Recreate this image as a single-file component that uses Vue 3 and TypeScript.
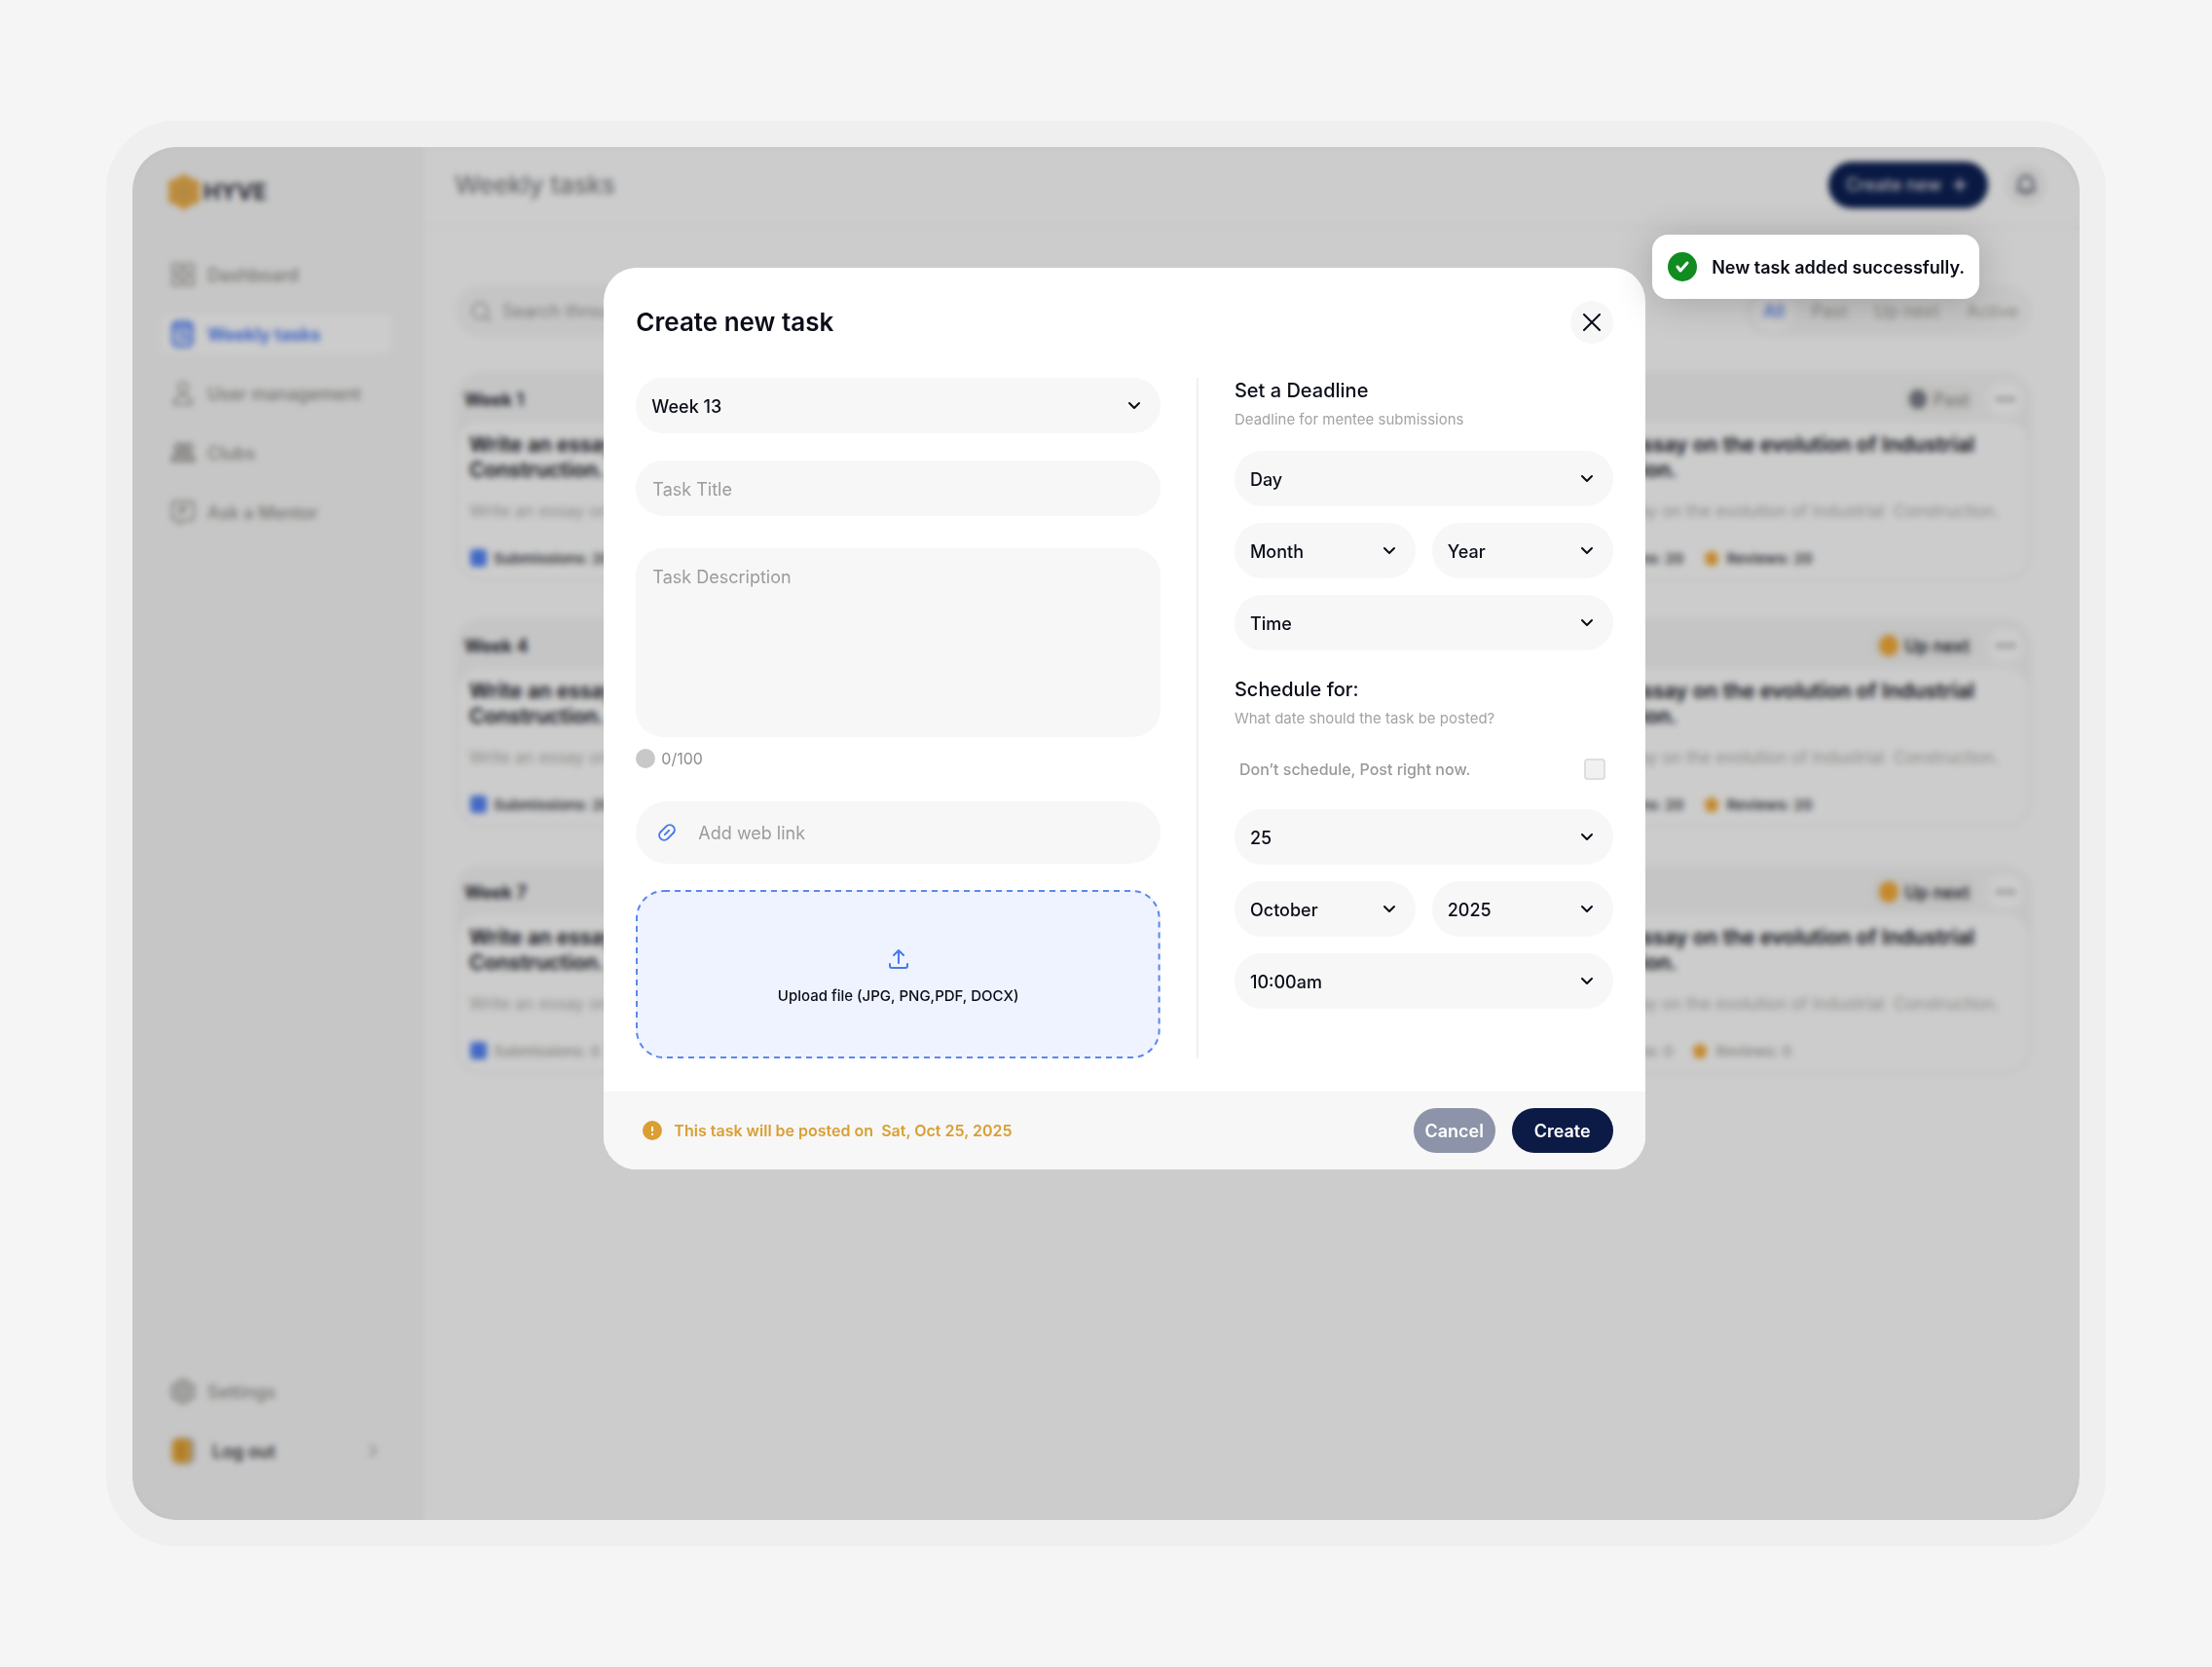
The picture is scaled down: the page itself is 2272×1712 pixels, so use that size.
<script setup lang="ts">
import { computed, ref } from 'vue'

type IconName = 'grid' | 'task' | 'user' | 'clubs' | 'chat'
interface NavItem { label: string; icon: IconName; active?: boolean }
interface TaskCard { week: number; status: 'Past' | 'Up next'; count: number }
interface Choice { name: string; options: string[]; half?: boolean }

const nav: NavItem[] = [
  { label: 'Dashboard', icon: 'grid' },
  { label: 'Weekly tasks', icon: 'task', active: true },
  { label: 'User management', icon: 'user' },
  { label: 'Clubs', icon: 'clubs' },
  { label: 'Ask a Mentor', icon: 'chat' },
]
const filters = ['All', 'Past', 'Up next', 'Active']
const cards: TaskCard[] = [1, 3, 4, 6, 7, 9].map((week) => ({
  week,
  status: week < 4 ? 'Past' : 'Up next',
  count: week < 7 ? 20 : 0,
}))
const deadline: Choice[] = [
  { name: 'Day', options: ['Day'] },
  { name: 'Month', options: ['Month'], half: true },
  { name: 'Year', options: ['Year'], half: true },
  { name: 'Time', options: ['Time'] },
]
const schedule: Choice[] = [
  { name: 'Schedule day', options: ['25'] },
  { name: 'Schedule month', options: ['October'], half: true },
  { name: 'Schedule year', options: ['2025'], half: true },
  { name: 'Schedule time', options: ['10:00am'] },
]
const title = ref('')
const description = ref('')
const link = ref('')
const postNow = ref(false)
const counter = computed(() => `${description.value.length}/100`)
</script>

<template>
  <div class="page">
    <div class="frame">
      <div class="app" inert>
        <aside class="sidebar">
          <div class="logo">
            <svg width="36" height="40" viewBox="0 0 36 40">
              <path d="M18 1l7 5 9 3v22l-9 3-7 5-7-5-9-3V9l9-3z" fill="#eeb04a" />
              <path d="M18 9v22M9 14l18 12M27 14L9 26" stroke="#d8ab62" stroke-width="2" />
            </svg>
            <span>HYVE</span>
          </div>
          <nav>
            <a v-for="n in nav" :key="n.label" href="#" :class="{ active: n.active }">
              <svg width="26" height="28" viewBox="0 0 26 28" fill="none" stroke="currentColor" stroke-width="2">
                <g v-if="n.icon === 'grid'">
                  <rect x="2" y="3" width="9" height="9" rx="2" /><rect x="15" y="3" width="9" height="9" rx="2" />
                  <rect x="2" y="16" width="9" height="9" rx="2" /><rect x="15" y="16" width="9" height="9" rx="2" />
                </g>
                <g v-else-if="n.icon === 'task'" stroke-width="3">
                  <rect x="3" y="2" width="19" height="24" rx="4" /><path d="M4 7h17M8 13h8M8 19h4M13 20l6-4" />
                </g>
                <g v-else-if="n.icon === 'user'">
                  <circle cx="13" cy="8" r="5" /><path d="M4 25c0-6 4-9 9-9s9 3 9 9z" />
                </g>
                <g v-else-if="n.icon === 'clubs'" stroke-width="3">
                  <circle cx="9" cy="9" r="4" /><circle cx="18" cy="9" r="4" />
                  <path d="M2 22c0-4 3-6 7-6s7 2 7 6zM17 16c4 0 7 2 7 6h-6" />
                </g>
                <g v-else>
                  <path d="M5 3h16a3 3 0 0 1 3 3v13a3 3 0 0 1-3 3h-8l-3 4-3-4H5a3 3 0 0 1-3-3V6a3 3 0 0 1 3-3z" />
                  <path d="M10 16V9h6l-6 7" />
                </g>
              </svg>
              {{ n.label }}
            </a>
          </nav>
          <nav class="bottom">
            <a href="#">
              <svg width="26" height="28" viewBox="0 0 26 28" fill="#e0e0e0" stroke="currentColor" stroke-width="2">
                <path d="M13 2l11 6v12l-11 6-11-6V8z" /><circle cx="13" cy="14" r="5" />
              </svg>
              Settings
            </a>
            <a href="#" class="logout">
              <svg width="26" height="28" viewBox="0 0 26 28">
                <rect x="1" y="0" width="24" height="28" rx="8" fill="#bdb6a8" />
                <rect x="2" y="2" width="18" height="24" rx="6" fill="#f5ac2c" />
                <path d="M8 9h6M8 14h6M8 19h6" stroke="#8c7c58" stroke-width="2" />
              </svg>
              <span>Log out</span>
              <svg class="go" width="10" height="16" viewBox="0 0 10 16" fill="none" stroke="#aaa" stroke-width="2">
                <path d="M2 2l6 6-6 6" />
              </svg>
            </a>
          </nav>
        </aside>

        <main class="main">
          <header class="top">
            <h1>Weekly tasks</h1>
            <button class="new" type="button">
              Create new
              <svg width="14" height="14" viewBox="0 0 14 14" stroke="#fff" stroke-width="2"><path d="M7 0v14M0 7h14" /></svg>
            </button>
            <button class="bell" type="button" aria-label="Notifications">
              <svg width="22" height="24" viewBox="0 0 22 24" fill="none" stroke="#6d717c" stroke-width="3">
                <path d="M11 3a7 7 0 0 0-7 7v4l-1 4h16l-1-4v-4a7 7 0 0 0-7-7zM8 20h6" />
              </svg>
            </button>
          </header>
          <div class="content">
            <div class="tools">
              <div class="search">
                <svg width="22" height="22" viewBox="0 0 22 22" fill="none" stroke="#a5a5a5" stroke-width="2">
                  <circle cx="10" cy="10" r="8" /><path d="M16 16l5 5" />
                </svg>
                <input type="search" placeholder="Search through tasks" aria-label="Search through tasks" />
              </div>
              <div class="filters">
                <button v-for="(f, i) in filters" :key="f" type="button" :class="{ on: i === 0 }">{{ f }}</button>
              </div>
            </div>
            <div class="cards">
              <article v-for="c in cards" :key="c.week" class="card">
                <div class="card-head">
                  <h2>Week {{ c.week }}</h2>
                  <span class="status" :class="{ past: c.status === 'Past' }"><i></i>{{ c.status }}</span>
                  <button class="more" type="button" aria-label="More">
                    <svg width="18" height="4" viewBox="0 0 18 4" fill="#666"><circle cx="2" cy="2" r="2" /><circle cx="9" cy="2" r="2" /><circle cx="16" cy="2" r="2" /></svg>
                  </button>
                </div>
                <div class="card-body">
                  <h3>Write an essay on the evolution of Industrial Construction.</h3>
                  <p>Write an essay on the evolution of Industrial&nbsp; Construction.</p>
                  <div class="stats" :class="{ none: c.count === 0 }">
                    <svg width="18" height="20" viewBox="0 0 18 20"><rect x="1" y="1" width="17" height="18" rx="4" fill="#5484f8" /></svg>
                    <span>Submissions: {{ c.count }}</span>
                    <svg class="star" width="18" height="18" viewBox="0 0 18 18"><path d="M9 0l3 4 5 2-2 5v5l-6 1-6-1v-5L1 6l5-2z" fill="#f5ac38" /></svg>
                    <span>Reviews: {{ c.count }}</span>
                  </div>
                </div>
              </article>
            </div>
          </div>
        </main>
      </div>

      <div class="overlay">
        <form class="modal" role="dialog" aria-labelledby="modal-title" @submit.prevent>
          <div class="modal-main">
            <div class="modal-head">
              <h2 id="modal-title">Create new task</h2>
              <button class="close" type="button" aria-label="Close">
                <svg width="18" height="18" viewBox="0 0 18 18" fill="none" stroke="#0a0d18" stroke-width="2" stroke-linecap="round"><path d="M1 1l16 16M17 1L1 17" /></svg>
              </button>
            </div>
            <div class="columns">
              <div class="left">
                <div class="select">
                  <select aria-label="Week"><option>Week 13</option></select>
                  <svg class="chev" width="14" height="10" viewBox="0 0 14 10"><path d="M2 2l5 5 5-5" /></svg>
                </div>
                <input v-model="title" class="field title-field" placeholder="Task Title" aria-label="Task Title" />
                <textarea v-model="description" class="field desc" placeholder="Task Description" aria-label="Task Description" maxlength="100"></textarea>
                <div class="counter"><i></i>{{ counter }}</div>
                <div class="field link-field">
                  <svg width="20" height="20" viewBox="0 0 20 20" fill="none" stroke="#477aeb" stroke-width="2" stroke-linecap="round">
                    <g transform="rotate(-45 10 10)">
                      <path d="M8 5H6a5 5 0 0 0 0 10h7M12 15h2a5 5 0 0 0 0-10H7M7 10h6" />
                    </g>
                  </svg>
                  <input v-model="link" placeholder="Add web link" aria-label="Add web link" />
                </div>
                <label class="drop">
                  <svg class="dash" aria-hidden="true"><rect x="1" y="1" rx="28" /></svg>
                  <input type="file" class="file" />
                  <svg width="20" height="20" viewBox="0 0 20 20" fill="none" stroke="#477aeb" stroke-width="2" stroke-linecap="round" stroke-linejoin="round">
                    <path d="M10 14V1M5 6l5-5 5 5M1 15v2q0 2 2 2h14q2 0 2-2v-2" />
                  </svg>
                  <span>Upload file (JPG, PNG,PDF, DOCX)</span>
                </label>
              </div>
              <div class="rule"></div>
              <div class="right">
                <h3>Set a Deadline</h3>
                <p>Deadline for mentee submissions</p>
                <div class="choices">
                  <div v-for="c in deadline" :key="c.name" class="select" :class="{ half: c.half }">
                    <select :aria-label="c.name"><option v-for="o in c.options" :key="o">{{ o }}</option></select>
                    <svg class="chev" width="14" height="10" viewBox="0 0 14 10"><path d="M2 2l5 5 5-5" /></svg>
                  </div>
                </div>
                <h3 class="second">Schedule for:</h3>
                <p>What date should the task be posted?</p>
                <label class="now">
                  <span>Don’t schedule, Post right now.</span>
                  <input v-model="postNow" type="checkbox" />
                </label>
                <div class="choices last">
                  <div v-for="c in schedule" :key="c.name" class="select" :class="{ half: c.half }">
                    <select :aria-label="c.name"><option v-for="o in c.options" :key="o">{{ o }}</option></select>
                    <svg class="chev" width="14" height="10" viewBox="0 0 14 10"><path d="M2 2l5 5 5-5" /></svg>
                  </div>
                </div>
              </div>
            </div>
          </div>
          <footer class="modal-foot">
            <svg width="20" height="20" viewBox="0 0 20 20"><circle cx="10" cy="10" r="10" fill="#d99f33" /><path d="M10 6v5M10 13v2" stroke="#fff" stroke-width="2" /></svg>
            <span class="notice">This task will be posted on&nbsp; Sat, Oct 25, 2025</span>
            <button class="cancel" type="button">Cancel</button>
            <button class="create" type="submit">Create</button>
          </footer>
        </form>
      </div>

      <div class="toast" role="status">
        <svg width="30" height="30" viewBox="0 0 30 30" fill="none"><circle cx="15" cy="15" r="15" fill="#108c20" /><path d="M10 15l3 4 7-8" stroke="#fff" stroke-width="3" stroke-linecap="round" stroke-linejoin="round" /></svg>
        <span>New task added successfully.</span>
      </div>
    </div>
  </div>
</template>

<style>
body { background: #f5f5f5; }
</style>

<style scoped>
* { box-sizing: border-box; }
h1, h2, h3, p { margin: 0; }
button, input, select, textarea { font: inherit; color: inherit; border: 0; outline: 0; background: none; padding: 0; margin: 0; }
svg { flex: none; display: block; }
a { color: inherit; text-decoration: none; }

.page { padding: 124px 109px; font-family: Inter, "Liberation Sans", sans-serif; color: #0a0d18; }
.frame {
  position: relative; min-height: calc(100vh - 248px); display: flex;
  border: 27px solid #efefef; border-radius: 72px; background: #efefef;
}
.app { flex: 1; display: flex; min-width: 0; border-radius: 45px; overflow: hidden; background: #fff; }

.sidebar { width: 298px; flex: none; background: #f8f8f8; border-right: 2px solid #f2f2f2; padding: 26px 29px 40px; display: flex; flex-direction: column; }
.logo { display: flex; align-items: center; gap: 2px; height: 40px; margin: 0 6px 45px; font-size: 23px; font-weight: 700; color: #2a2d38; }
nav { display: flex; flex-direction: column; gap: 21px; font-size: 18px; font-weight: 500; color: #95938f; }
nav a { display: flex; align-items: center; gap: 12px; height: 40px; padding: 0 10px; border-radius: 8px; }
nav a.active { background: #fff; color: #3f74f6; font-weight: 600; }
.sidebar .bottom { margin-top: auto; padding-bottom: 11px; }
.logout { color: #23262f; }
.logout span { margin-left: 5px; }
.logout .go { margin-left: auto; margin-right: 5px; }

.main { flex: 1; min-width: 0; }
.top { display: flex; align-items: center; height: 83px; padding: 0 34px 4px 33px; border-bottom: 2px solid #f7f7f7; }
.top h1 { flex: 1; font-size: 26px; font-weight: 500; color: #85868a; }
.new { display: flex; align-items: center; justify-content: center; gap: 12px; width: 164px; height: 48px; padding-right: 4px; border-radius: 24px; background: #0c2054; color: #d8d8dc; font-size: 18px; font-weight: 500; }
.bell { display: grid; place-items: center; width: 42px; height: 42px; margin-left: 18px; border-radius: 50%; background: #f4f4f4; }
.content { padding: 59px 49px 0 33px; }
.tools { display: flex; justify-content: space-between; margin-bottom: 36px; }
.search { display: flex; align-items: center; gap: 11px; width: 480px; height: 53px; padding: 0 16px; border-radius: 27px; background: #f7f7f7; font-size: 18px; color: #999; }
.search input { flex: 1; min-width: 0; }
.search input::placeholder { color: #999; }
.filters { display: flex; align-items: center; height: 53px; padding: 0 2px; border-radius: 27px; background: #f8f8f8; font-size: 18px; color: #aaa9a6; }
.filters button { height: 44px; padding: 0 12px; margin-left: 4px; border-radius: 22px; }
.filters .on { background: #fff; color: #3f74f6; }
.cards { display: grid; grid-template-columns: repeat(3, 1fr); gap: 38px 33px; }
.card { grid-column: 1; padding: 3px; border-radius: 28px; background: #f7f7f7; }
.card:nth-child(even) { grid-column: 3; }
.card-head { display: flex; align-items: center; height: 48px; padding: 2px 7px 0 7px; }
.card-head h2 { flex: 1; font-size: 18px; font-weight: 600; }
.status { display: flex; align-items: center; gap: 6px; height: 32px; padding: 0 8px; border-radius: 16px; background: #f1f1f0; font-size: 18px; font-weight: 500; }
.status i { width: 20px; height: 22px; border-radius: 10px; background: #f5ac38; }
.status.past { color: #96948e; }
.status.past i { width: 18px; height: 20px; background: #7b7f8a; }
.more { display: grid; place-items: center; width: 34px; height: 34px; margin-left: 12px; border-radius: 12px; background: #fff; }
.card-body { padding: 11px 12px; height: 161px; border-radius: 25px; background: #fff; }
.card-body h3 { font-size: 21px; line-height: 26px; font-weight: 600; }
.card-body p { margin-top: 17px; font-size: 17px; line-height: 24px; white-space: nowrap; color: #b2b1ae; }
.stats { display: flex; align-items: center; gap: 7px; height: 20px; margin-top: 26px; font-size: 15px; font-weight: 600; color: #3c3f49; }
.stats.none { font-weight: 500; color: #a9a8a4; }
.stats .star { margin-left: 12px; }

.overlay {
  position: absolute; inset: 0; display: flex; justify-content: center; align-items: flex-start; padding: 124px 0 0 38px;
  border-radius: 45px; background: rgba(0, 0, 0, 0.2); backdrop-filter: blur(3px);
}
.modal { width: 54.5%; min-width: 900px; border-radius: 34px; overflow: hidden; background: #fff; font-size: 18px; }
.modal-main { padding: 34px 33px; }
.modal-head { display: flex; align-items: center; justify-content: space-between; margin-bottom: 35px; }
.modal-head h2 { font-size: 26px; line-height: 44px; font-weight: 600; }
.close { display: grid; place-items: center; width: 44px; height: 44px; border-radius: 50%; background: #f7f7f7; }
.columns { display: grid; grid-template-columns: 539fr 2px 389fr; column-gap: 37px; }
.rule { background: #f1f1f1; }
.left { display: flex; flex-direction: column; }
.select { position: relative; height: 57px; }
.select select { appearance: none; width: 100%; height: 100%; padding: 2px 44px 0 16px; border-radius: 28px; background: #f7f7f7; font-weight: 500; }
.chev { position: absolute; right: 20px; top: 24px; fill: none; stroke: #0a0d18; stroke-width: 2; stroke-linecap: round; stroke-linejoin: round; pointer-events: none; }
.field { width: 100%; border-radius: 28px; background: #f7f7f7; }
.field::placeholder, .field input::placeholder { color: #9b9b9b; opacity: 1; }
.title-field { height: 57px; margin-top: 28px; padding: 2px 17px 0; }
.desc { display: block; height: 194px; margin-top: 33px; padding: 18px 17px; line-height: 24px; resize: none; }
.counter { display: flex; align-items: center; gap: 6px; height: 20px; margin-top: 12px; font-size: 16px; color: #8d8d8d; }
.counter i { width: 20px; height: 20px; border-radius: 50%; background: #c8c8c8; }
.link-field { display: flex; align-items: center; gap: 22px; height: 64px; margin-top: 34px; padding: 0 22px; border-radius: 32px; }
.link-field input { flex: 1; min-width: 0; }
.drop { position: relative; display: flex; flex-direction: column; align-items: center; gap: 18px; height: 173px; margin-top: 27px; padding-top: 61px; border-radius: 29px; background: #eff3ff; font-size: 15px; line-height: 20px; font-weight: 500; }
.dash { position: absolute; inset: 0; width: 100%; height: 100%; }
.dash rect { width: calc(100% - 2px); height: calc(100% - 2px); fill: none; stroke: #5a88ec; stroke-width: 2; stroke-dasharray: 6 5; }
.file { position: absolute; inset: 0; opacity: 0; }
.right h3 { font-size: 20px; line-height: 26px; font-weight: 500; }
.right p { margin-top: 7px; font-size: 15px; line-height: 20px; color: #a3a3a3; }
.choices { display: grid; grid-template-columns: 1fr 1fr; gap: 17px; margin-top: 22px; }
.choices .select { grid-column: span 2; }
.choices .half { grid-column: span 1; }
.right .second { margin-top: 27px; }
.now { display: flex; align-items: center; justify-content: space-between; height: 22px; margin-top: 31px; padding: 0 8px 0 5px; font-size: 16px; font-weight: 500; color: #999; }
.now input { appearance: none; width: 22px; height: 22px; border: 2px solid #dedede; border-radius: 4px; background: #f1f1f1; }
.choices.last { margin-top: 30px; }
.modal-foot { display: flex; align-items: center; height: 80px; padding: 0 33px 0 40px; background: #f7f7f7; }
.notice { flex: 1; margin-left: 12px; font-size: 16px; font-weight: 600; color: #d99f33; }
.cancel, .create { height: 46px; border-radius: 23px; color: #fff; font-weight: 600; }
.cancel { width: 84px; background: #8d93a8; }
.create { width: 104px; margin-left: 17px; background: #0c1b45; }

.toast {
  position: absolute; top: 90px; right: 103px; display: flex; align-items: center; gap: 15px; height: 66px; padding: 0 15px 0 16px;
  border-radius: 16px; background: #fff; box-shadow: 0 4px 40px rgba(0, 0, 0, 0.2); font-size: 18px; font-weight: 600;
}
</style>
